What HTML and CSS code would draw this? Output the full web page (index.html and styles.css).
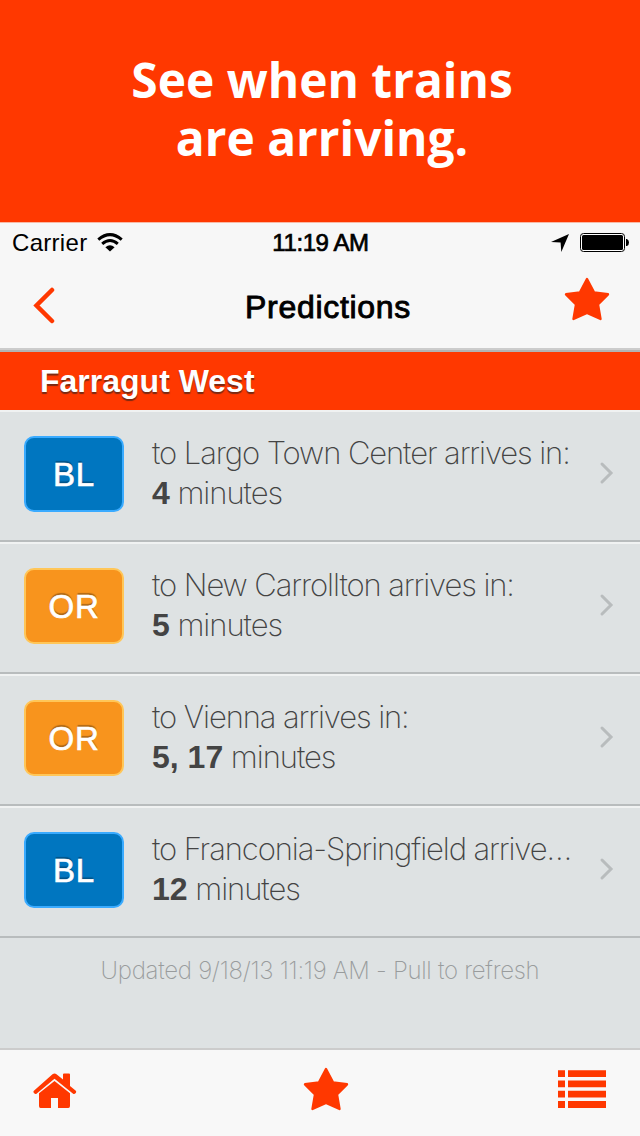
FILE: index.html
```
<!DOCTYPE html>
<html lang="en">
<head>
<meta charset="utf-8">
<title>Predictions</title>
<link rel="stylesheet" href="styles.css">
</head>
<body>
<header class="promo"><h1>See when trains<br>are arriving.</h1></header>
<main class="phone">
  <div class="status">
    <div class="carrier"><span>Carrier</span>
      <svg width="26" height="20" viewBox="0 0 26 20"><g fill="none" stroke="#000" stroke-width="3"><path d="M1.300 6.700Q13-3.400 24.700 6.700"/><path d="M5.200 10.900Q13 4.200 20.800 10.900"/></g><path d="M8.400 14.200Q13 10.200 17.600 14.200L13 18.500Z"/></svg>
    </div>
    <div class="time">11:19 AM</div>
    <div class="indicators">
      <svg width="18" height="18" viewBox="0 0 18 18"><path d="M18 0L10.300 18L9.600 8.600L0 8Z"/></svg>
      <svg width="49" height="19" viewBox="0 0 49 19"><rect x=".5" y=".5" width="44" height="18" rx="3" fill="#fff" stroke="#000"/><rect x="2" y="2" width="41" height="15" rx="1.500"/><path d="M46 6h1q2 1 2 3.500t-2 3.500h-1z"/></svg>
    </div>
  </div>
  <nav class="nav">
    <svg class="back" width="24" height="38" viewBox="0 0 24 38"><path d="M20 3L4.500 18.500L20 34" fill="none" stroke="#ff3800" stroke-width="4.500" stroke-linecap="round"/></svg>
    <h2>Predictions</h2>
    <svg class="fav" width="46" height="44" viewBox="0 0 46 44"><path class="star" d="M23 2L30 15.400L44 17.300L34 27.500L36.500 42L23 36L9.500 42L12 27.500L2 17.300L16 15.400Z"/></svg>
  </nav>
  <h3 class="station"><span>Farragut West</span></h3>
  <ul class="rows">
    <li class="row"><div class="badge blue">BL</div><div class="info"><div class="dest">to Largo Town Center arrives in:</div><div class="mins"><b>4</b> minutes</div></div><svg class="chev" width="16" height="24" viewBox="0 0 16 24"><path d="M3 3L12 12L3 21"/></svg></li>
    <li class="row"><div class="badge orange">OR</div><div class="info"><div class="dest">to New Carrollton arrives in:</div><div class="mins"><b>5</b> minutes</div></div><svg class="chev" width="16" height="24" viewBox="0 0 16 24"><path d="M3 3L12 12L3 21"/></svg></li>
    <li class="row"><div class="badge orange">OR</div><div class="info"><div class="dest">to Vienna arrives in:</div><div class="mins"><b>5, 17</b> minutes</div></div><svg class="chev" width="16" height="24" viewBox="0 0 16 24"><path d="M3 3L12 12L3 21"/></svg></li>
    <li class="row"><div class="badge blue">BL</div><div class="info"><div class="dest">to Franconia-Springfield arrive<span class="dots">…</span></div><div class="mins"><b>12</b> minutes</div></div><svg class="chev" width="16" height="24" viewBox="0 0 16 24"><path d="M3 3L12 12L3 21"/></svg></li>
  </ul>
  <p class="updated"><span>Updated 9/18/13 11:19 AM - Pull to refresh</span></p>
</main>
<footer class="tabs">
  <svg class="home" width="44" height="36" viewBox="0 0 44 36"><path fill="#ff3800" d="M30 1.500Q30 .5 31 .5H36Q37 .5 37 1.500V13L42.800 17.800Q43.700 19 42.500 20.300Q41.200 21.600 39.800 20.400L21.500 5.800L3.800 20.400Q2.500 21.600 1.200 20.300Q-.2 19 .9 17.700L19.500 1.300Q21.500 -.3 23.500 1.200L30 6.500Z"/><path fill="#ff3800" d="M21.500 8L37 20.300V33Q37 35 35.300 35H25V25H18V35H7.500Q6 35 6 33V20.300Z"/></svg>
  <svg class="tabstar" width="46" height="44" viewBox="0 0 46 44"><path class="star" d="M23 2L30 15.400L44 17.300L34 27.500L36.500 42L23 36L9.500 42L12 27.500L2 17.300L16 15.400Z"/></svg>
  <svg class="list" width="48" height="38" viewBox="0 0 48 38"><path fill="#ff3800" d="M0 .2h7v6.800H0zM10 .2h38v6.800H10zM0 10.400h7v6.900H0zM10 10.400h38v6.900H10zM0 20.700h7v6.900H0zM10 20.700h38v6.900H10zM0 31h7v6.900H0zM10 31h38v6.900H10z"/></svg>
</footer>
</body>
</html>
```
FILE: styles.css
```
* { box-sizing: border-box; margin: 0; padding: 0; }
body { width: 640px; height: 1136px; overflow: hidden; display: flex; flex-direction: column; background: #dee2e3; font-family: "Liberation Sans", Arial, sans-serif; color: #000; }
svg { display: block; flex: none; }
.promo { height: 222px; background: #ff3800; padding-top: 51px; text-align: center; }
.promo h1 { color: #fff; font: 700 47.900px/58px "Open Sans", sans-serif; padding-left: 4px; }
.phone { flex: 1; }
.status { height: 40px; background: #f7f7f7; border-top: 1px solid #f9b9a5; display: grid; grid-template-columns: 1fr 120px 1fr; align-items: center; padding: 0 11px 0 12px; font-size: 24px; line-height: 40px; }
.carrier { display: flex; align-items: center; gap: 10px; }
.carrier svg { margin-top: -1px; }
.carrier span { letter-spacing: .3px; }
.time { text-align: center; white-space: nowrap; font-size: 24px; letter-spacing: -.4px; -webkit-text-stroke: .7px #000; }
.indicators { display: flex; justify-content: flex-end; align-items: center; gap: 11px; }
.indicators svg { margin-top: -1px; }
.nav { height: 88px; background: #f7f7f7; border-bottom: 2px solid #ccc; display: grid; grid-template-columns: 100px 1fr 100px; align-items: start; }
.nav h2 { font-size: 32px; font-weight: 400; line-height: 90px; text-align: center; letter-spacing: .700px; -webkit-text-stroke: .9px #000; padding-left: 16px; }
.back { margin: 25px 0 0 32px; }
.fav { margin: 15px 0 0 24px; }
.star { fill: #ff3800; stroke: #ff3800; stroke-width: 2.400px; stroke-linejoin: round; }
.station { height: 60px; border-top: 2px solid #b3b3b3; background: #ff3800; color: #fff; padding-left: 40px; font-size: 32px; line-height: 59px; font-weight: 700; text-shadow: 0 2px 1px #7a2a12; }
.rows { list-style: none; }
.row { height: 132px; border-top: 2px solid #f0f2f2; border-bottom: 2px solid #b8bcbd; padding: 24px 24px 0; display: flex; align-items: flex-start; }
.badge { width: 100px; height: 76px; border-radius: 10px; border: 2px solid; color: #fff; font-size: 33px; line-height: 73px; text-align: center; letter-spacing: .800px; -webkit-text-stroke: .7px #fff; text-shadow: 0 -2px 1px rgba(0,0,0,.3); }
.blue { background: #0076c0; border-color: #3aabff; }
.orange { background: #f8941d; border-color: #ffc658; }
.info { margin-left: 28px; width: 424px; height: 80px; margin-top: -3px; font-family: Inter, sans-serif; font-weight: 200; font-size: 31px; line-height: 40px; color: #444; white-space: nowrap; }
.dest { letter-spacing: -1.090px; }
.mins { letter-spacing: -1.050px; }
.mins b { font-family: "Liberation Sans", Arial, sans-serif; font-weight: 700; font-size: 32px; letter-spacing: 0; }
.chev { margin: 25px 0 0 23px; }
.chev path { fill: none; stroke: #b8bcbd; stroke-width: 3px; stroke-linecap: round; }
.updated { text-align: center; padding-top: 16px; font: 200 24px/34px Inter, sans-serif; letter-spacing: -.280px; color: #999c9d; }
.tabs { height: 88px; flex: none; border-top: 2px solid #ccc; background: #f8f8f8; display: flex; justify-content: space-between; align-items: flex-start; padding: 20px 34px 0 33px; }
.home { margin-top: 3px; }
.tabstar { margin: -3px 0 0 16px; }
```
